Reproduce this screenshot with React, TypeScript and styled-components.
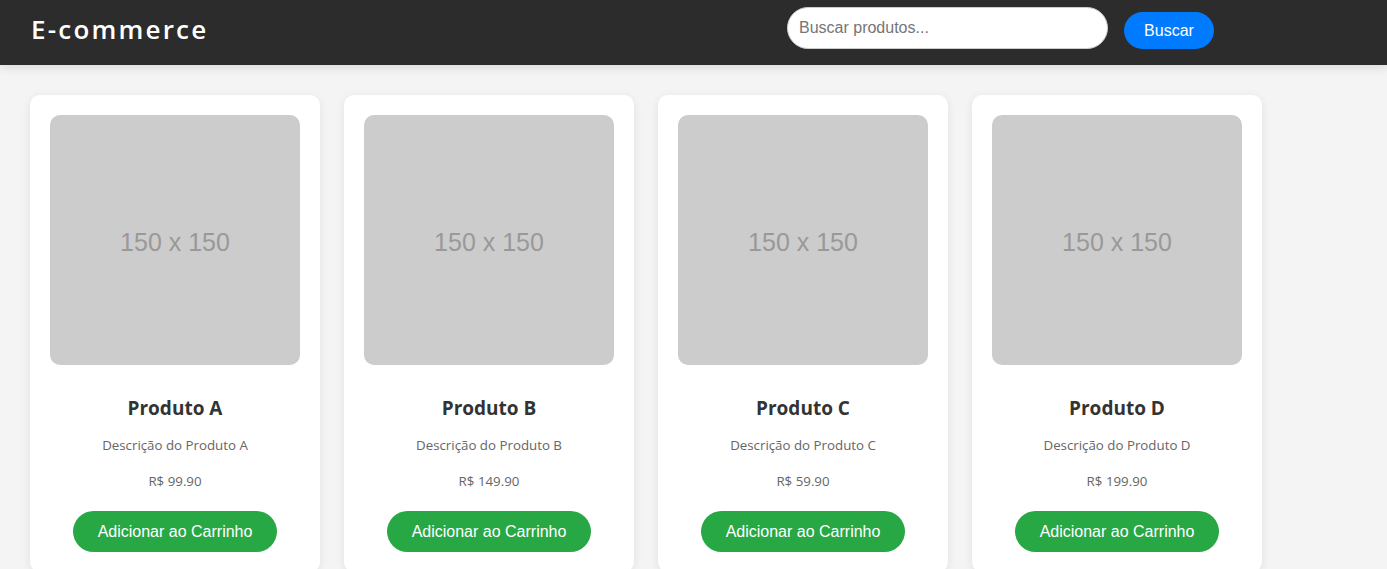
import React from "react";
import styled, { createGlobalStyle } from "styled-components";

const GlobalStyle = createGlobalStyle`
  html, body { margin: 0; padding: 0; }
  body {
    background: #f4f4f4;
    font-family: "Open Sans", "Noto Sans", sans-serif;
    overflow: hidden;
  }
`;

const Header = styled.header`
  height: 65px;
  box-sizing: border-box;
  background: #2c2c2c;
  display: flex;
  align-items: center;
  justify-content: space-between;
  padding: 0 173px 0 31px;
  box-shadow: 0 2px 10px rgba(0, 0, 0, 0.12);
  position: relative;
  z-index: 1;
`;

const Logo = styled.h1`
  margin: -7px 0 0;
  color: #fff;
  font-family: "Open Sans", sans-serif;
  font-size: 26px;
  font-weight: 600;
  letter-spacing: 2.2px;
  line-height: 1;
`;

const SearchForm = styled.form`
  display: flex;
  align-items: flex-end;
  gap: 16px;
  height: 42px;
  margin-top: -9px;
`;

const SearchInput = styled.input`
  width: 321px;
  height: 42px;
  box-sizing: border-box;
  border: 1px solid #ccc;
  border-radius: 21px;
  padding: 0 11px;
  font-family: "Liberation Sans", Arial, sans-serif;
  font-size: 16px;
  color: #333;
  outline: none;
  &::placeholder { color: #757575; }
`;

const SearchButton = styled.button`
  width: 90px;
  height: 37px;
  border: none;
  border-radius: 19px;
  background: #007bff;
  color: #fff;
  font-family: "Liberation Sans", Arial, sans-serif;
  font-size: 16px;
  cursor: pointer;
`;

const Grid = styled.main`
  display: flex;
  gap: 24px;
  padding: 30px 30px;
`;

const Card = styled.div`
  width: 290px;
  box-sizing: border-box;
  background: #fff;
  border-radius: 10px;
  padding: 20px;
  box-shadow: 0 2px 10px rgba(0, 0, 0, 0.08);
  display: flex;
  flex-direction: column;
  align-items: center;
  text-align: center;
`;

const Placeholder = styled.div`
  width: 250px;
  height: 250px;
  box-sizing: border-box;
  padding-top: 4px;
  background: #cccccc;
  border-radius: 10px;
  display: flex;
  align-items: center;
  justify-content: center;
  color: #999;
  font-family: "Liberation Sans", Arial, sans-serif;
  font-size: 25px;
`;

const Title = styled.h3`
  margin: 30px 0 0;
  font-size: 19px;
  font-weight: 700;
  color: #333;
  line-height: 27px;
`;

const Desc = styled.p`
  margin: 14px 0 0;
  font-size: 13.3px;
  color: #666;
  line-height: 19px;
`;

const Price = styled.p`
  margin: 17px 0 0;
  font-size: 13.3px;
  color: #666;
  line-height: 19px;
`;

const AddButton = styled.button`
  margin-top: 20px;
  height: 41px;
  padding: 0 25px;
  border: none;
  border-radius: 21px;
  background: #28a745;
  color: #fff;
  font-family: "Liberation Sans", Arial, sans-serif;
  font-size: 16px;
  cursor: pointer;
`;

const products = [
  { name: "Produto A", price: "99.90" },
  { name: "Produto B", price: "149.90" },
  { name: "Produto C", price: "59.90" },
  { name: "Produto D", price: "199.90" },
];

export default function App() {
  return (
    <>
      <GlobalStyle />
      <Header>
        <Logo>E-commerce</Logo>
        <SearchForm onSubmit={(e) => e.preventDefault()}>
          <SearchInput placeholder="Buscar produtos..." />
          <SearchButton type="submit">Buscar</SearchButton>
        </SearchForm>
      </Header>
      <Grid>
        {products.map((p) => (
          <Card key={p.name}>
            <Placeholder>150 x 150</Placeholder>
            <Title>{p.name}</Title>
            <Desc>Descrição do {p.name}</Desc>
            <Price>R$ {p.price}</Price>
            <AddButton>Adicionar ao Carrinho</AddButton>
          </Card>
        ))}
      </Grid>
    </>
  );
}
